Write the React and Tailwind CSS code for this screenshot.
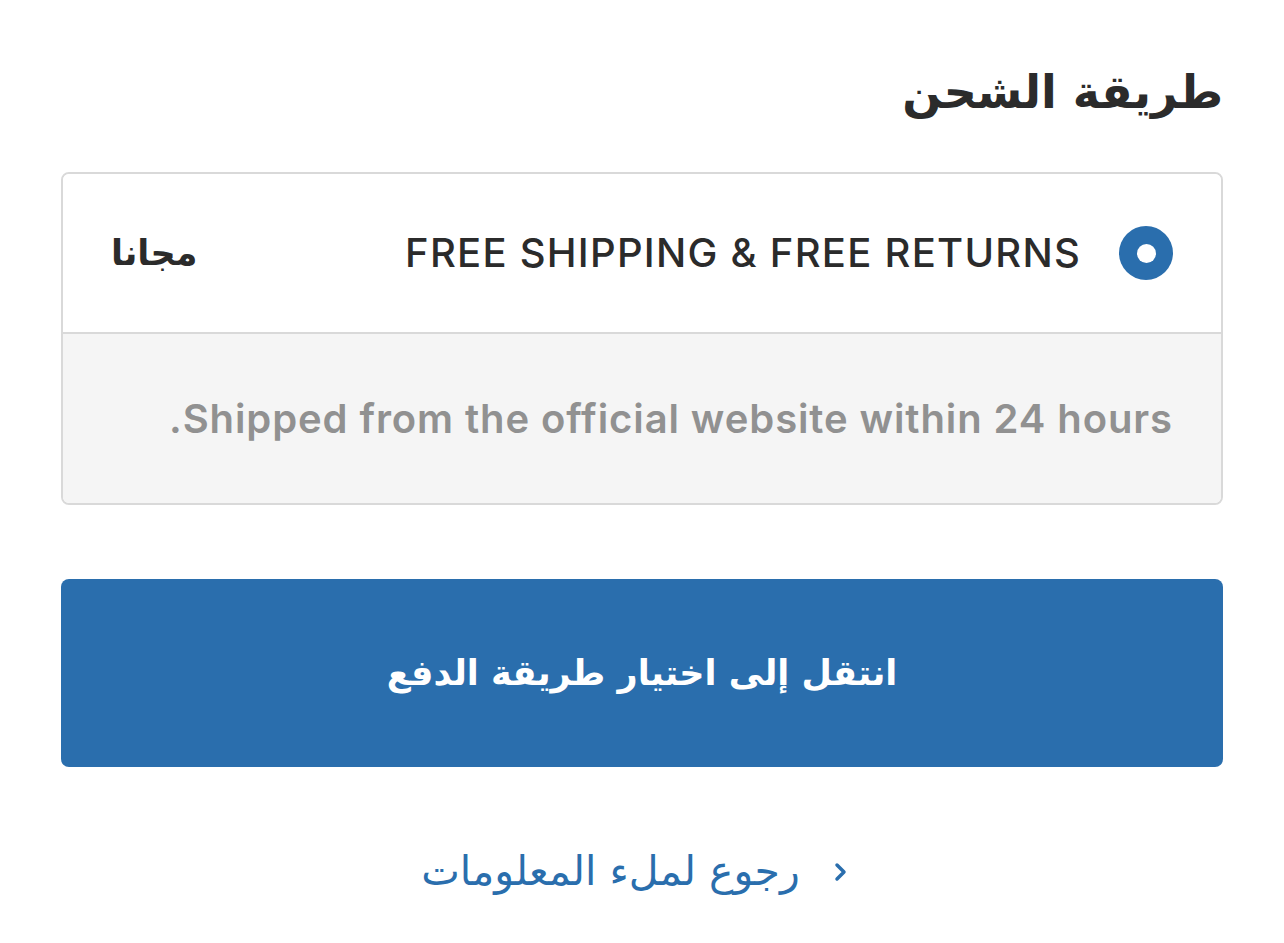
const App = () => {
  return (
    <div dir="rtl" className="min-h-screen bg-white px-[61px] pt-[56px]" style={{ fontFamily: '"Inter", "Noto Sans", "DejaVu Sans", sans-serif' }}>
      <h2 className="text-[46px] font-bold text-[#2b2b2b] leading-[72px]" style={{ fontFamily: '"DejaVu Sans", sans-serif' }}>
        طريقة الشحن
      </h2>

      <div className="mt-[44px] border-2 border-[#d9d9d9] rounded-lg overflow-hidden">
        <label className="flex items-center h-[158px] px-[48px] bg-white cursor-pointer">
          <span className="w-[54px] h-[54px] rounded-full bg-[#2a6ead] flex items-center justify-center shrink-0">
            <span className="w-[19px] h-[19px] rounded-full bg-white" />
          </span>
          <span className="mr-[38px] text-[40px] font-medium tracking-[1.25px] text-[#2b2b2b]">
            FREE SHIPPING &amp; FREE RETURNS
          </span>
          <span className="mr-auto text-[35px] font-bold text-[#2b2b2b]" style={{ fontFamily: '"DejaVu Sans", sans-serif' }}>
            مجانا
          </span>
        </label>
        <div className="border-t-2 border-[#d9d9d9] bg-[#f5f5f5] h-[171px] px-[48px] flex items-center">
          <p className="text-[40px] font-semibold tracking-[0.9px] text-[#919191]">
            Shipped from the official website within 24 hours.
          </p>
        </div>
      </div>

      <button className="mt-[74px] w-full h-[188px] rounded-lg bg-[#2a6ead] text-white text-[35px] font-bold" style={{ fontFamily: '"DejaVu Sans", sans-serif' }}>
        انتقل إلى اختيار طريقة الدفع
      </button>

      <div className="mt-[74px] flex justify-center">
        <a href="#" className="flex items-center gap-[33px] text-[#2a6ead] text-[41px] font-medium -translate-x-[7px]" style={{ fontFamily: '"DejaVu Sans", sans-serif' }}>
          <svg width="16" height="22" viewBox="0 0 16 22" fill="none" stroke="currentColor" strokeWidth="3.5" strokeLinecap="round" strokeLinejoin="round">
            <path d="M4 4l7 7-7 7" />
          </svg>
          <span>رجوع لملء المعلومات</span>
        </a>
      </div>
    </div>
  );
};

export default App;
